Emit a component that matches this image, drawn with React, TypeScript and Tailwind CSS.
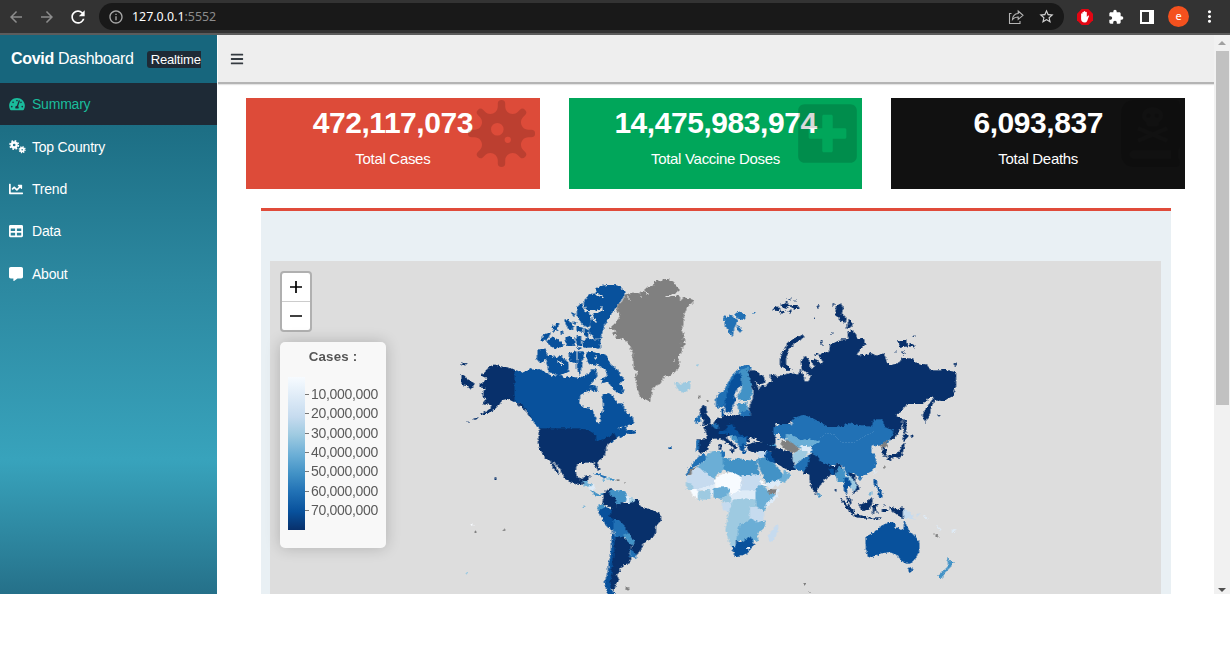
import React from "react";
import { FaBars, FaBookDead, FaChartLine, FaPlusSquare, FaTable, FaTachometerAlt, FaVirus } from "react-icons/fa";
import { FaMessage } from "react-icons/fa6";
import { MdExtension, MdMoreVert, MdRefresh, MdStarOutline, MdInfoOutline, MdArrowBack, MdArrowForward } from "react-icons/md";

const N = "#08306b";
const B1 = "#08519c";
const B2 = "#2171b5";
const B3 = "#4292c6";
const B4 = "#6baed6";
const B5 = "#9ecae1";
const B6 = "#c6dbef";
const B7 = "#deebf7";
const B8 = "#f7fbff";
const G = "#808080";
const SEA = "#dddddd";

type Shape = [string, string];

const americas: Shape[] = [
  [N, "193,330 170,323 150,320 133,314 118,320 103,337 92,346 105,352 110,360 90,372 87,380 108,386 95,398 98,410 110,415 98,432 125,434 122,446 105,456 90,465 110,460 130,450 145,435 155,420 170,416 193,425"],
  [N, "34,342 45,352 52,362 72,370 68,378 62,388 50,378 34,374"],
  [N, "34,308 46,312 44,316 34,313"],
  [N, "48,487 55,485 52,489"],
  [N, "68,478 82,472 78,478"],
  [N, "193,424 205,432 218,432 235,450 247,474 240,474 225,450 205,436"],
  [B1, "193,330 215,340 235,330 240,324 248,332 265,328 285,337 305,350 330,345 345,355 360,350 385,355 400,350 413,345 423,330 437,330 440,348 428,365 418,375 422,388 400,397 388,410 385,430 400,442 425,450 432,470 440,490 452,485 450,465 460,450 458,430 455,405 475,400 490,410 500,430 515,432 520,445 530,462 545,470 550,490 530,495 505,502 495,512 520,500 527,502 525,512 545,510 558,518 545,522 530,520 510,534 505,525 500,532 488,545 465,545 438,548 415,514 390,509 270,509 258,498 240,468 215,432 193,425"],
  [B1, "400,125 415,105 440,97 435,85 455,78 480,75 505,78 520,90 522,105 505,130 490,150 470,180 460,200 450,235 430,235 415,215 420,190 430,160 448,152 420,152 405,145"],
  [B1, "382,140 395,130 400,150 420,165 418,195 405,200 393,190 380,165"],
  [B1, "395,240 402,245 410,232 425,240 450,238 447,265 420,262 400,262"],
  [B1, "375,232 390,228 392,258 380,255"],
  [B1, "410,280 420,276 440,280 465,285 480,315 500,330 520,360 505,372 518,385 515,402 495,395 480,375 465,355 472,335 450,318 440,312 430,316 408,305"],
  [B1, "285,290 300,285 318,296 330,285 352,308 355,335 325,345 295,335 290,315"],
  [B1, "262,270 285,266 290,290 270,310 260,298"],
  [B1, "355,280 378,275 378,308 360,305"],
  [B1, "382,275 400,275 395,310 388,345 380,325"],
  [B1, "270,240 285,222 300,218 292,234 278,245"],
  [B1, "288,245 305,232 325,240 340,255 320,265 300,258"],
  [B1, "345,232 358,230 372,240 370,258 350,258"],
  [B1, "342,180 355,180 365,195 368,208 352,204"],
  [B1, "305,200 325,190 322,205 310,215"],
  [B1, "378,198 395,200 398,215 380,212"],
  [B1, "363,158 373,163 370,170"],
  [B1, "370,185 377,188 373,196"],
  [B1, "403,205 414,212 412,232 402,225"],
  [B1, "420,375 435,378 442,395 425,392"],
  [B1, "452,355 470,352 472,365 455,368"],
  [B1, "330,215 338,212 336,222"],
  [B1, "378,262 392,264 385,270"],
  [SEA, "398,152 420,150 440,152 452,145 456,132 458,150 440,160 420,157"],
  [SEA, "430,100 455,106 462,118 450,110 432,105"],
  [SEA, "432,290 440,288 436,300"],
  [SEA, "322,302 340,312 338,316 322,308"],
  [SEA, "425,165 432,175 440,190 434,186 426,176"],
  [N, "267,507 390,507 415,512 435,525 438,545 460,538 480,528 495,518 500,530 488,540 478,548 466,560 465,575 460,590 445,600 439,610 446,628 443,632 436,618 433,608 415,606 395,608 380,612 374,630 378,648 388,660 400,655 405,648 419,648 415,658 402,662 395,675 375,672 350,662 340,648 330,630 315,610 305,602 290,598 278,585 268,568 263,545"],
  [N, "299,600 308,610 316,622 326,640 320,640 308,624"],
  [B1, "490,510 502,506 508,525 498,532"],
  [B4, "398,664 410,664 412,674 430,674 422,682 400,676"],
  [B7, "413,682 432,674 432,690 422,690"],
  [B3, "421,690 432,696 442,704 458,700 456,706 442,708 426,700"],
  [B2, "428,641 442,640 468,651 462,655 448,646"],
  [B3, "478,655 492,657 488,662 478,660"],
  [B5, "470,654 478,655 476,660 468,660"],
  [G, "498,659 507,659 507,662 498,662"],
  [G, "520,667 524,667 524,670 520,670"],
  [B4, "455,659 461,659 460,662 455,662"],
  [B2, "656,563 662,563 662,567 656,567"],
  [N, "458,702 468,690 482,686 478,698 498,710 500,728 498,748 487,748 478,740 455,732 460,715"],
  [B3, "478,692 486,688 500,692 525,695 530,705 525,725 512,728 508,734 498,730 495,712 480,704"],
  [B7, "527,703 540,715 540,730 530,728"],
  [B5, "540,715 553,718 552,730 536,729"],
  [N, "487,747 500,745 500,734 512,728 530,730 550,728 558,715 570,740 585,745 600,750 620,756 631,764 630,780 617,798 615,818 606,833 590,842 577,852 572,866 557,886 538,870 547,860 552,848 545,838 530,822 525,803 500,780 480,780 473,768"],
  [B3, "445,735 460,735 465,744 450,757 443,752"],
  [B1, "443,755 465,742 485,750 473,768 492,782 490,812 470,800 455,775"],
  [B2, "489,782 505,780 525,800 532,820 520,830 495,832 490,812"],
  [B3, "518,824 535,820 540,832 552,842 548,856 533,848"],
  [N, "495,832 515,830 535,850 545,856 537,870 535,882 542,895 536,909 520,912 518,920 505,925 508,935 498,945 505,960 494,975 492,988 478,985 478,965 480,920 485,880"],
  [B1, "485,812 493,830 490,870 484,910 480,960 480,988 494,1002 472,1002 463,970 473,930 482,870"],
  [B2, "538,868 556,880 555,892 540,890"],
  [G, "526,984 538,984 533,991 527,989"],
  [N, "133,654 138,654 138,659 133,659"],
  [G, "159,810 163,810 163,813 159,813"],
  [G, "73,815 77,815 77,818 73,818"],
  [B8, "63,792 68,792 68,796 63,796"],
  [B5, "46,937 50,937 50,940 46,940"],
  [B4, "399,738 403,738 403,741 399,741"],
];

const northAtlantic: Shape[] = [
  [G, "50,125 65,110 75,90 100,83 110,97 125,100 132,80 137,70 155,66 165,50 200,42 218,50 225,62 238,75 225,85 190,98 235,90 240,110 250,98 275,102 278,112 260,125 250,150 248,180 242,195 250,215 240,235 245,255 230,275 237,300 220,325 190,335 180,355 158,365 150,400 148,412 135,402 122,400 112,375 105,340 112,320 100,310 98,265 85,235 65,220 45,222 48,212 35,205 50,198 28,190 50,170 60,150 50,140"],
  [G, "100,84 118,86 132,78 160,62 180,70 200,96 120,110"],
  [SEA, "132,76 146,88 146,91 132,80"],
  [SEA, "118,100 124,88 124,100"],
  [SEA, "190,96 215,88 238,86 238,90 212,94"],
  [SEA, "82,92 90,108 84,104"],
  [SEA, "226,278 218,292 224,290"],
  [G, "242,228 253,222 250,244 242,246"],
  [B5, "225,352 232,352 240,362 250,352 268,352 270,365 262,376 250,382 232,375"],
  [B2, "370,150 385,158 395,150 400,160 410,165 405,180 400,190 397,212 388,205 382,195 373,178"],
  [B2, "402,148 415,140 437,150 430,165 412,160"],
  [B2, "410,180 425,196 418,202 412,195"],
  [B2, "457,141 464,143 460,146"],
  [N, "515,132 530,125 540,132 528,138"],
  [N, "540,120 560,112 568,125 555,130"],
  [N, "568,122 592,120 596,132 580,130"],
  [N, "533,142 555,138 545,146"],
  [N, "563,138 575,132 568,146"],
  [N, "563,100 570,102 566,106"],
  [N, "584,104 590,106 586,109"],
  [B2, "348,425 347,400 358,385 370,380 385,350 400,325 420,306 440,300 452,307 448,315 425,315 410,330 395,355 385,385 378,410 375,420 360,428"],
  [B1, "405,328 422,325 425,358 410,370 400,390 405,405 395,425 390,445 376,440 374,415 380,385 390,355"],
  [B3, "420,315 445,308 446,325 452,345 456,378 445,407 420,408 412,395 425,372 426,350"],
  [B3, "413,418 440,412 442,442 420,450 414,435"],
  [B2, "420,445 445,436 460,462 455,472 425,474"],
  [N, "300,432 308,420 318,430 316,445 330,465 328,478 305,482 312,465 300,452"],
  [B2, "286,460 298,448 300,468 286,474"],
  [B1, "361,435 368,430 372,450 363,454"],
  [G, "294,393 299,393 299,400 295,400"],
  [G, "319,406 323,406 323,410 319,410"],
  [B5, "288,300 293,300 293,304 288,304"],
];

const russia: Shape[] = [
  [N, "-97,243 -75,243 -50,260 -47,278 -62,282 -78,272 -65,300 -55,285 -45,290 -35,278 -25,275 -30,255 -22,252 -10,262 0,258 30,250 52,255 60,240 68,258 72,275 85,275 92,255 80,250 65,240 62,215 75,198 85,210 88,235 105,232 93,215 105,208 125,225 128,215 115,198 125,190 145,188 150,165 180,150 205,148 202,125 215,122 225,132 228,142 250,148 253,165 240,178 225,198 255,195 270,190 290,198 310,190 318,218 332,226 355,220 365,205 395,206 410,220 440,225 450,243 480,243 490,238 525,248 526,290 518,300 522,315 490,332 463,330 452,350 445,380 433,398 428,375 440,350 462,322 445,322 425,342 380,342 345,378 365,388 362,410 345,440 330,452 335,425 310,412 305,390 280,390 275,412 200,402 190,410 165,412 145,412 105,392 70,378 40,390 20,402 -15,402 -18,432 -15,460 -45,462 -80,445 -120,435 -150,395 -105,395 -85,380 -95,355 -82,325 -80,300 -92,270"],
  [N, "68,135 50,142 25,155 10,180 0,205 -1,225 25,242 32,238 16,222 16,205 24,180 42,160 70,142"],
  [N, "168,50 180,40 187,55 184,70 198,85 194,98 178,90 165,72"],
  [N, "205,88 218,100 210,112 196,115 203,104"],
  [N, "350,152 375,150 382,168 360,172"],
  [N, "388,160 405,168 402,172 388,168"],
  [N, "366,184 376,192 370,194"],
  [N, "520,222 527,218 525,228"],
  [N, "398,137 403,137 403,140 398,140"],
  [N, "110,48 116,48 113,53"],
  [N, "150,133 158,128 154,135"],
  [N, "121,155 125,152 125,168"],
  [N, "369,385 376,395 378,420 372,432 368,410"],
  [N, "155,40 163,42 158,47"],
  [N, "101,84 105,84 105,87 101,87"],
  [N, "105,190 112,190 110,196"],
  [N, "345,185 348,185 348,188 345,188"],
  [N, "474,376 478,376 478,379 474,379"],
];

const africa: Shape[] = [
  [N, "130,22 150,12 158,18 165,-2 180,-8 205,-14 240,-12 290,-12 340,5 345,32 335,60 345,75 320,68 290,60 275,52 265,68 250,55 235,40 200,48 175,55 158,55 148,70 135,95 118,98 110,90 108,60 140,58 138,38"],
  [B2, "107,62 116,60 114,92 108,92"],
  [B2, "155,16 172,14 176,25 162,24"],
  [B1, "198,18 225,12 240,22 258,25 266,45 258,58 235,52 215,45 200,40 175,42 178,34 200,32"],
  [N, "176,50 198,46 200,58 222,74 232,84 226,90 205,72 186,60"],
  [N, "176,75 182,72 183,88 177,88"],
  [N, "208,90 222,88 218,97"],
  [B3, "208,46 225,48 235,62 228,70"],
  [B2, "230,50 258,56 256,72 240,84 233,72"],
  [B1, "236,78 256,72 250,88 258,98 248,103"],
  [SEA, "266,52 272,42 285,50 296,40 306,52 318,62 300,66 285,62 268,68"],
  [N, "256,76 290,66 315,70 342,78 342,92 320,96 290,99 265,92"],
  [B3, "318,64 346,74 344,84 322,72"],
  [B2, "108,118 125,102 140,106 138,120 112,135 92,145 86,164 77,166 84,148"],
  [G, "90,148 112,140 110,148 95,152 93,162 82,166"],
  [B4, "138,104 150,95 187,93 186,115 192,145 170,162 160,176 112,140 138,120"],
  [B2, "182,93 190,92 192,106 187,116"],
  [B3, "187,112 215,122 232,114 252,122 250,168 235,170 190,148"],
  [B3, "250,120 288,124 290,138 298,165 250,165"],
  [B6, "78,168 95,165 96,152 112,142 162,178 160,195 135,202 115,215 80,195"],
  [B8, "163,178 190,160 220,158 242,172 242,215 212,222 200,204 165,202"],
  [B6, "244,166 298,164 302,188 290,212 268,216 238,214 245,190"],
  [B7, "210,224 245,212 288,214 288,240 240,238 208,245"],
  [B7, "112,208 160,193 164,206 150,235 145,210"],
  [B5, "76,188 92,192 98,206 80,206"],
  [B8, "88,208 112,212 116,238 98,225"],
  [B5, "113,215 148,210 150,236 113,239"],
  [B4, "160,205 200,202 208,215 190,236 160,232"],
  [B5, "186,236 206,218 212,248 188,250"],
  [B6, "184,250 218,244 208,276 188,268"],
  [B5, "218,240 250,236 288,240 285,262 270,270 268,298 250,310 236,318 242,335 228,355 222,380 210,375 196,330 205,280"],
  [B4, "290,200 305,194 322,212 328,222 346,224 318,252 312,272 290,262 285,225"],
  [B8, "298,180 306,185 318,196 304,194"],
  [G, "320,212 348,208 345,222 325,220"],
  [B7, "348,208 357,208 348,235 330,252 315,264 318,250 345,226"],
  [B6, "270,262 290,262 310,275 308,300 290,308 270,295"],
  [B4, "238,315 262,305 270,295 290,308 313,302 312,322 290,342 292,360 270,367 238,362 228,365 232,340"],
  [B1, "214,378 226,380 228,364 240,368 270,350 280,374 262,398 240,408 224,411"],
  [B8, "260,380 267,383 262,389"],
  [B6, "350,312 353,325 340,362 328,366 325,350 332,335"],
  [B6, "290,94 322,94 315,108 296,112"],
  [B3, "290,118 315,112 345,135 362,155 370,180 345,182 318,188 302,155"],
  [B7, "315,190 335,186 358,178 364,190 328,206"],
  [B4, "355,180 368,165 372,150 390,165 372,188"],
  [B1, "320,93 338,100 344,130 325,122 312,110"],
  [N, "330,78 348,84 365,90 395,100 398,130 406,150 385,150 365,140 345,128 335,105"],
  [B1, "27,83 32,83 32,87 27,87"],
];

const asia: Shape[] = [
  [B2, "-20,22 0,12 35,14 40,-5 70,-15 105,0 145,22 165,20 190,20 200,10 275,22 280,0 305,-2 312,22 338,32 330,55 322,70 300,72 290,80 275,74 270,88 282,105 288,130 275,152 250,165 235,170 220,158 200,165 190,140 175,130 150,140 120,130 100,105 90,92 95,70 60,60 20,42 12,60 0,50 -8,62 -20,42"],
  [SEA, "-16,44 -2,40 2,50 -8,58 0,74 6,84 -6,88 -14,66"],
  [B4, "16,44 32,45 60,62 80,58 118,65 90,78 65,85 45,80 20,62"],
  [G, "2,65 25,62 55,85 48,98 35,96 8,85"],
  [B7, "62,75 95,85 92,95 65,94"],
  [B5, "38,102 60,90 82,95 72,115 52,130 38,124"],
  [B2, "45,135 75,112 95,100 90,125 75,155 45,148"],
  [N, "92,102 108,108 120,125 148,138 180,132 184,145 160,165 150,162 130,180 112,205 105,224 90,190 86,162 68,160 80,140"],
  [B1, "146,145 160,148 160,166 150,160"],
  [B7, "152,135 164,137 160,142"],
  [B3, "114,219 121,224 119,234 114,232"],
  [B3, "175,140 190,150 198,185 197,205 190,185 172,186 166,165"],
  [B1, "190,175 205,172 218,186 212,198 200,200 198,222 192,212"],
  [N, "205,158 225,165 225,185 236,205 218,223 222,205 228,198 212,172"],
  [B5, "200,168 212,172 230,198 222,212 210,205 214,190"],
  [N, "196,225 210,238 213,254 203,246"],
  [N, "177,233 200,252 222,275 220,283 208,276"],
  [N, "221,284 260,290 260,295 221,290"],
  [N, "265,292 275,293 275,297 265,297"],
  [N, "280,294 302,294 292,300 282,299"],
  [N, "235,255 255,250 272,231 276,245 268,268 245,272"],
  [N, "277,256 294,252 282,262 292,278 284,270 279,281"],
  [N, "310,250 315,255 312,262"],
  [N, "306,268 324,269 322,273 306,272"],
  [N, "327,260 340,264 348,272 366,262 368,296 345,280 332,270"],
  [B6, "368,266 385,275 405,300 388,292 368,294"],
  [B6, "408,286 418,280 410,290"],
  [B7, "428,288 445,296 432,292"],
  [B7, "470,315 480,332 474,328"],
  [G, "460,341 475,352 466,350"],
  [B7, "516,330 524,330 522,336 516,336"],
  [B1, "280,178 288,182 290,198 281,196"],
  [B1, "288,200 300,208 306,232 290,228 298,218"],
  [B4, "266,224 278,212 268,228"],
  [B7, "281,150 286,154 283,162"],
  [B2, "234,170 243,172 238,182"],
  [G, "298,76 320,64 318,80 308,88"],
  [N, "306,85 317,88 318,108 308,110"],
  [N, "318,116 326,105 345,102 358,98 365,75 372,68 368,92 360,112 340,110 326,122"],
  [N, "365,58 372,44 384,50 370,62"],
  [N, "390,48 399,44 396,50"],
  [G, "311,141 315,141 315,144 311,144"],
  [SEA, "268,88 290,78 288,88 275,94"],
  [B1, "255,352 285,335 298,320 312,314 325,306 345,310 345,322 362,332 370,325 372,303 380,322 388,335 415,362 417,388 402,422 388,430 375,430 358,415 345,402 325,395 300,400 280,408 264,412 258,390"],
  [B1, "383,443 397,443 391,458 386,455"],
  [B3, "499,411 508,424 520,428 505,446 497,452 483,474 472,470 495,448 505,436"],
  [G, "69,489 76,491 73,494"],
  [G, "86,515 90,515 90,518 86,518"],
  [N, "165,208 168,208 168,214 165,214"],
];

function Region({ x, y, shapes }: { x: number; y: number; shapes: Shape[] }) {
  return (
    <g transform={`translate(${x} ${y}) scale(.33333)`}>
      {shapes.map(([fill, points], i) => (
        <polygon key={i} fill={fill} stroke={fill} strokeWidth={fill === SEA ? 0 : 2} points={points} />
      ))}
    </g>
  );
}

function WorldMap() {
  return (
    <svg className="block h-full w-full" viewBox="269.5 261 891 333" shapeRendering="crispEdges">
      <defs>
        <filter id="coast" x="440" y="261" width="540" height="340" filterUnits="userSpaceOnUse" colorInterpolationFilters="sRGB">
          <feTurbulence type="fractalNoise" baseFrequency="0.35" numOctaves="2" seed="4" />
          <feDisplacementMap in="SourceGraphic" scale="3.6" xChannelSelector="R" yChannelSelector="G" />
        </filter>
      </defs>
      <g filter="url(#coast)">
        <Region x={450} y={260} shapes={americas} />
        <Region x={600} y={265} shapes={northAtlantic} />
        <Region x={660} y={420} shapes={africa} />
        <Region x={780} y={290} shapes={russia} />
        <Region x={780} y={420} shapes={asia} />
      </g>
      <path d="M817 440l9-7 8 2 6 7 14 0 20-11" fill="none" stroke="#4a8cc5" strokeWidth=".6" strokeDasharray="2 1" />
    </svg>
  );
}

function Gears({ className }: { className?: string }) {
  return (
    <svg className={className} viewBox="0 0 50 42" fill="none" stroke="currentColor">
      <circle cx="15" cy="15" r="7.500" strokeWidth="7" />
      <circle cx="15" cy="15" r="12.500" strokeWidth="5" strokeDasharray="5 4.817" />
      <circle cx="39" cy="29" r="5" strokeWidth="5.500" />
      <circle cx="39" cy="29" r="8.700" strokeWidth="4" strokeDasharray="3.500 3.333" />
    </svg>
  );
}

function BrowserBar() {
  return (
    <div className="flex h-[35px] items-center border-b-2 border-[#5c5c5c] bg-[#333333] text-[#dedede]">
      <MdArrowBack className="ml-[7px] size-[18px] text-[#8d8d8d]" />
      <MdArrowForward className="ml-[13px] size-[18px] text-[#8d8d8d]" />
      <MdRefresh className="ml-[12px] size-[20px] text-white" />
      <div className="ml-[11px] flex h-[27px] w-[965px] items-center rounded-full bg-[#191919] pr-[9px] pl-[9px]">
        <MdInfoOutline className="size-4 text-[#a8a8a8]" />
        <span className="ml-2 pt-px font-['Noto_Sans',sans-serif] text-[12.4px] text-white">
          127.0.0.1<span className="text-[#8c8c8c]">:5552</span>
        </span>
        <svg className="ml-auto size-4" viewBox="0 0 16 16" fill="none" stroke="#b5b5b5" strokeWidth="1.1">
          <path d="M3.500 4.500H1.500v10h10.500V12" />
          <path d="M4.500 10.500c.3-4 2.300-5.700 5.700-6V2l4.800 4.300-4.800 4V8c-2.600 0-4.300.7-5.700 2.500z" />
        </svg>
        <MdStarOutline className="ml-[14px] size-[17px] text-[#d2d2d2]" />
      </div>
      <svg className="ml-[13px] size-4" viewBox="0 0 16 16">
        <path fill="#e30613" d="M4.700 0h6.600L16 4.700v6.600L11.300 16H4.700L0 11.300V4.700z" />
        <path fill="#fff" d="M4.100 8V4.700q.6-.7 1.300 0V3.200q.7-.8 1.400 0v-.7q.8-.8 1.500 0v.7q.8-.7 1.500 0V8l1.300-1.500q.9-.3.900.5l-1.800 5Q9.300 13.800 7.600 13.600 4.200 13.300 4.100 10z" />
      </svg>
      <MdExtension className="ml-[15px] size-4 text-white" />
      <svg className="ml-[16px] size-[14px]" viewBox="0 0 14 14">
        <path fill="#fff" fillRule="evenodd" d="M0 0h14v14H0zM2 2v10h7V2z" />
      </svg>
      <span className="ml-[14px] flex size-[21px] items-center justify-center rounded-full bg-[#f4511e] pb-px font-['Noto_Sans',sans-serif] text-[11px] text-white">e</span>
      <MdMoreVert className="ml-[11px] size-[19px] text-white" />
    </div>
  );
}

const nav = [
  { label: "Summary", icon: FaTachometerAlt, row: "flex h-[42.4px] items-center bg-[#1e2a36] pl-[9px] text-[#1abc9c]", size: "h-[14px] w-4" },
  { label: "Top Country", icon: Gears, row: "flex h-[42.4px] items-center pl-[9px]", size: "h-[14px] w-[17px]" },
  { label: "Trend", icon: FaChartLine, row: "flex h-[42.4px] items-center pl-[9px]", size: "size-[14px]" },
  { label: "Data", icon: FaTable, row: "flex h-[42.4px] items-center pl-[9px]", size: "size-[14px]" },
  { label: "About", icon: FaMessage, row: "flex h-[42.4px] items-center pl-[9px]", size: "size-[14px]" },
];

function Sidebar() {
  return (
    <aside className="w-[217px] shrink-0 bg-[linear-gradient(180deg,#17667d_0%,#1d6f85_17%,#2c88a0_44%,#38a3bc_76%,#2b8099_93%,#257089_100%)] text-white">
      <div className="flex h-12 items-center bg-[#17667d] pl-[11px] whitespace-pre">
        <span className="text-[16px] tracking-[-0.3px]">
          <b>Covid</b> Dashboard
        </span>
        <span className="ml-[13px] h-[17px] rounded-l-[3px] bg-[#1e2a36] pl-1 text-[13px] leading-[18px] tracking-[-0.15px]">Realtime</span>
      </div>
      <nav>
        {nav.map(({ label, icon: Icon, row, size }) => (
          <div key={label} className={row}>
            <div className="w-[23px]">
              <Icon className={size} />
            </div>
            <span className="pt-px text-[14px] tracking-[-0.22px]">{label}</span>
          </div>
        ))}
      </nav>
    </aside>
  );
}

const cards = [
  { value: "472,117,073", label: "Total Cases", box: "relative h-[91px] flex-1 bg-[#dd4b39] text-center", icon: FaVirus, pos: "absolute top-[2px] right-[5px] size-[67px] text-black/15" },
  { value: "14,475,983,974", label: "Total Vaccine Doses", box: "relative h-[91px] flex-1 bg-[#00a65a] text-center", icon: FaPlusSquare, pos: "absolute top-[2px] right-[1px] size-[67px] text-black/15" },
  { value: "6,093,837", label: "Total Deaths", box: "relative h-[91px] flex-1 bg-[#111111] text-center", icon: FaBookDead, pos: "absolute top-[2px] right-[1px] size-[67px] text-black/15" },
];

const ticks = ["10,000,000", "20,000,000", "30,000,000", "40,000,000", "50,000,000", "60,000,000", "70,000,000"];

function Legend() {
  return (
    <div className="mt-[10px] h-[206px] w-[106px] rounded-[5px] bg-[#f8f8f8] pt-[7px] text-[#555] shadow-[0_0_15px_rgba(0,0,0,0.2)]">
      <div className="text-center text-[13.300px] leading-4 font-bold tracking-[0.2px]">Cases :</div>
      <div className="mt-3 flex pl-2">
        <div className="h-[153px] w-[17px] bg-[linear-gradient(180deg,#f7fbff_0%,#deebf7_13%,#c6dbef_26%,#9ecae1_38%,#6baed6_51%,#4292c6_63%,#2171b5_75%,#08519c_88%,#08306b_100%)]" />
        <div className="pt-[8.500px]">
          {ticks.map((t) => (
            <div key={t} className="flex h-[19.300px] items-center text-[14px] tracking-[-0.3px] text-[#5a5a5a]">
              <span className="mr-[2px] h-px w-1 bg-[#777]" />
              {t}
            </div>
          ))}
        </div>
      </div>
    </div>
  );
}

export default function App() {
  return (
    <div className="h-[648px] w-[1230px] overflow-hidden bg-white font-['Liberation_Sans',Arial,sans-serif]">
      <BrowserBar />
      <div className="flex h-[559px] overflow-hidden">
        <Sidebar />
        <main className="min-w-0 flex-1">
          <header className="ml-px flex h-[49px] items-center border-b-2 border-[#b4b4b4] bg-[#eeeeee] pl-[12px] shadow-[0_1px_1px_#e4e4e4]">
            <FaBars className="size-[14px] text-[#343a40]" />
          </header>
          <div className="flex gap-[29px] px-[29px] pt-[14px]">
            {cards.map(({ value, label, box, icon: Icon, pos }) => (
              <section key={label} className={box}>
                <div className="pt-[9px] text-[30px] leading-8 font-bold tracking-[-0.45px] text-white">{value}</div>
                <div className="mt-[11px] text-[15px] leading-[18px] tracking-[-0.3px] text-white">{label}</div>
                <Icon className={pos} />
              </section>
            ))}
          </div>
          <section className="mt-[19px] mr-[43px] ml-[44px] h-[390px] border-t-[3px] border-[#e04b3a] bg-[#e9f0f4] pt-[50px] pr-[10px] pl-[9px]">
            <div className="grid h-[333px] bg-[#dddddd]">
              <div className="col-start-1 row-start-1 h-[333px]">
                <WorldMap />
              </div>
              <div className="col-start-1 row-start-1 pt-[9.500px] pl-[10px]">
                <div className="w-[32px] overflow-hidden rounded-[4px] border-2 border-[#b0b0b0] bg-white">
                  <div className="flex h-[29px] items-center justify-center border-b border-[#ccc]">
                    <svg className="size-3" viewBox="0 0 12 12"><path d="M6 0v12M0 6h12" stroke="#000" strokeWidth="1.700" /></svg>
                  </div>
                  <div className="flex h-[28px] items-center justify-center">
                    <svg className="size-3" viewBox="0 0 12 12"><path d="M0 6h12" stroke="#000" strokeWidth="1.500" /></svg>
                  </div>
                </div>
                <Legend />
              </div>
            </div>
          </section>
        </main>
        <div className="flex w-4 shrink-0 flex-col items-center bg-[#f1f1f1]">
          <svg className="h-4 w-2 shrink-0" viewBox="0 0 8 16"><path d="M0 10l4-4 4 4z" fill="#a0a0a0" /></svg>
          <div className="h-[354px] w-[13px] bg-[#c1c1c1]" />
          <svg className="mt-auto h-4 w-2 shrink-0" viewBox="0 0 8 16"><path d="M0 10l4 4 4-4z" fill="#505050" /></svg>
        </div>
      </div>
    </div>
  );
}
